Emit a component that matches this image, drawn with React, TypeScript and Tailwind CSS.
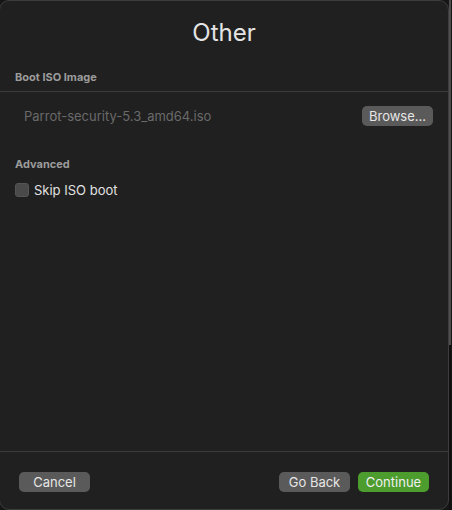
import React from 'react';

export default function App() {
  return (
    <div
      className="flex w-[452px] h-[510px] bg-[#161616] overflow-hidden"
      style={{ fontFamily: 'Inter, "Noto Sans", sans-serif' }}
    >
      <div className="flex flex-col w-[450px] h-[510px] -ml-px bg-[#202020] border border-[#3d3d3d] rounded-[10px] text-[#e2e2e2]">
        <div className="h-[69px] flex justify-center pt-[20px]">
          <h1 className="text-[24px] leading-none text-[#e4e4e4]">Other</h1>
        </div>

        <div className="px-[15px] pb-[7px] text-[11px] leading-[14px] font-bold text-[#9c9c9c]">Boot ISO Image</div>
        <div className="h-px bg-[#3a3a3a]" />

        <div className="flex items-center justify-between pl-[24px] pr-[15px] pt-[14px]">
          <span className="text-[13px] leading-[16px] text-[#6a6a6a]">Parrot-security-5.3_amd64.iso</span>
          <button className="w-[71px] h-[20px] rounded-[5px] bg-[#5a5a5a] text-[13px] text-[#e6e6e6] leading-none">
            Browse...
          </button>
        </div>

        <div className="px-[15px] pt-[31px] text-[11px] leading-[14px] font-bold text-[#9c9c9c]">Advanced</div>
        <label className="flex items-center gap-[5px] px-[15px] pt-[11px]">
          <span className="w-[14px] h-[14px] rounded-[3px] bg-[#4a4a4a] border border-[#555555]" />
          <span className="text-[13px] leading-[16px] text-[#e2e2e2]">Skip ISO boot</span>
        </label>

        <div className="flex-1" />
        <div className="h-px bg-[#3a3a3a]" />

        <div className="flex items-center justify-between pl-[19px] pr-[19px] pt-[20px] pb-[17px]">
          <button className="w-[71px] h-[20px] rounded-[5px] bg-[#5a5a5a] text-[13px] text-[#e6e6e6] leading-none">
            Cancel
          </button>
          <div className="flex gap-[8px]">
            <button className="w-[71px] h-[20px] rounded-[5px] bg-[#5a5a5a] text-[13px] text-[#e6e6e6] leading-none">
              Go Back
            </button>
            <button className="w-[71px] h-[20px] rounded-[5px] bg-[#4c9c2e] text-[13px] text-[#f0f0f0] leading-none">
              Continue
            </button>
          </div>
        </div>
      </div>
      <div className="flex flex-col w-[2px]">
        <div className="h-[345px] bg-[#4e4e4e]" />
        <div className="flex-1 bg-[#101010]" />
      </div>
    </div>
  );
}
